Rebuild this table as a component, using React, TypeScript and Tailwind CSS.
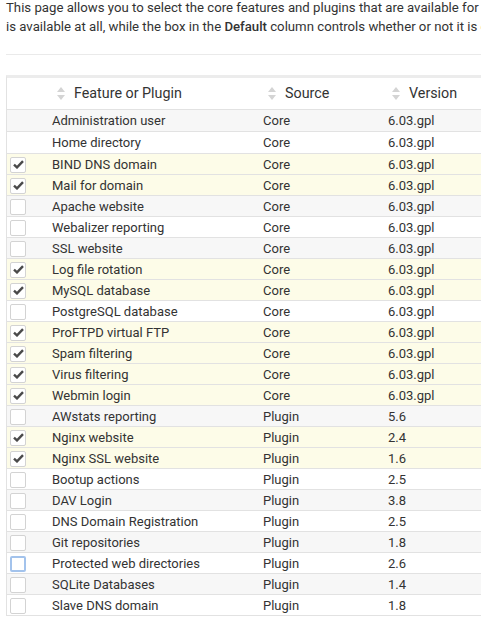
import { useState } from 'react';

type Feature = {
  name: string;
  source: 'Core' | 'Plugin';
  version: string;
  checked?: boolean;
  fixed?: boolean;
};

const features: Feature[] = [
  { name: 'Administration user', source: 'Core', version: '6.03.gpl', fixed: true },
  { name: 'Home directory', source: 'Core', version: '6.03.gpl', fixed: true },
  { name: 'BIND DNS domain', source: 'Core', version: '6.03.gpl', checked: true },
  { name: 'Mail for domain', source: 'Core', version: '6.03.gpl', checked: true },
  { name: 'Apache website', source: 'Core', version: '6.03.gpl' },
  { name: 'Webalizer reporting', source: 'Core', version: '6.03.gpl' },
  { name: 'SSL website', source: 'Core', version: '6.03.gpl' },
  { name: 'Log file rotation', source: 'Core', version: '6.03.gpl', checked: true },
  { name: 'MySQL database', source: 'Core', version: '6.03.gpl', checked: true },
  { name: 'PostgreSQL database', source: 'Core', version: '6.03.gpl' },
  { name: 'ProFTPD virtual FTP', source: 'Core', version: '6.03.gpl', checked: true },
  { name: 'Spam filtering', source: 'Core', version: '6.03.gpl', checked: true },
  { name: 'Virus filtering', source: 'Core', version: '6.03.gpl', checked: true },
  { name: 'Webmin login', source: 'Core', version: '6.03.gpl', checked: true },
  { name: 'AWstats reporting', source: 'Plugin', version: '5.6' },
  { name: 'Nginx website', source: 'Plugin', version: '2.4', checked: true },
  { name: 'Nginx SSL website', source: 'Plugin', version: '1.6', checked: true },
  { name: 'Bootup actions', source: 'Plugin', version: '2.5' },
  { name: 'DAV Login', source: 'Plugin', version: '3.8' },
  { name: 'DNS Domain Registration', source: 'Plugin', version: '2.5' },
  { name: 'Git repositories', source: 'Plugin', version: '1.8' },
  { name: 'Protected web directories', source: 'Plugin', version: '2.6' },
  { name: 'SQLite Databases', source: 'Plugin', version: '1.4' },
  { name: 'Slave DNS domain', source: 'Plugin', version: '1.8' },
];

function SortIcon() {
  return (
    <svg width="8" height="13" viewBox="0 0 8 13" className="shrink-0">
      <path d="M4 0 L8 5 L0 5 Z" fill="#d4d4d4" />
      <path d="M0 8 L8 8 L4 13 Z" fill="#d4d4d4" />
    </svg>
  );
}

function Checkbox({ checked, focused, onToggle }: { checked: boolean; focused?: boolean; onToggle: () => void }) {
  return (
    <button
      type="button"
      onClick={onToggle}
      className={`flex items-center justify-center w-[16px] h-[16px] rounded-[2px] bg-white ${
        focused ? 'border-2 border-[#a3c3ec]' : 'border border-[#d3d3d3]'
      }`}
    >
      {checked && (
        <svg width="11" height="9" viewBox="0 0 11 9" className="-mt-[1px]">
          <path d="M1 4.6 L4 7.4 L10 1.2" fill="none" stroke="#4a4a4a" strokeWidth="2.4" />
        </svg>
      )}
    </button>
  );
}

export default function App() {
  const [rows, setRows] = useState(features);

  const toggle = (i: number) =>
    setRows((prev) => prev.map((r, j) => (j === i ? { ...r, checked: !r.checked } : r)));

  const rowBg = (r: Feature, i: number) => {
    if (r.checked) return 'bg-[#fdfce8]';
    return i % 2 === 0 ? 'bg-[#f7f7f7]' : 'bg-white';
  };

  return (
    <div className="w-[481px] h-[620px] overflow-hidden bg-white text-[#333] font-['Roboto',sans-serif]">
      <div className="w-[700px] pl-[6px]">
        <div className="text-[13.2px] leading-[19px] -mt-[2px] whitespace-nowrap">
          <p>This page allows you to select the core features and plugins that are available for new virtual servers. The checkbox in the Enabled column</p>
          <p>
            is available at all, while the box in the <b className="font-medium">Default</b> column controls whether or not it is enabled by default.
          </p>
        </div>
        <hr className="mt-[18px] border-t border-[#eaeaea]" />

        <div className="mt-[20px] border-t-[3px] border-l border-[#ececec] border-l-[#e2e2e2] w-[640px]">
          <div className="flex h-[32px] items-center border-b border-[#e2e2e2] text-[14.3px]">
            <div className="w-[40px]" />
            <div className="w-[211px] flex items-center gap-[9px] pl-[10px]">
              <SortIcon />
              <span>Feature or Plugin</span>
            </div>
            <div className="w-[125px] flex items-center gap-[9px] pl-[10px]">
              <SortIcon />
              <span>Source</span>
            </div>
            <div className="w-[150px] flex items-center gap-[9px] pl-[9px]">
              <SortIcon />
              <span>Version</span>
            </div>
          </div>

          {rows.map((r, i) => (
            <div
              key={r.name}
              className={`flex items-center border-b border-[#e2e2e2] text-[13px] ${r.fixed ? 'h-[22px]' : 'h-[21px] pt-[2px]'} ${rowBg(r, i)}`}
            >
              <div className="w-[40px] pl-[3px] flex items-center">
                {!r.fixed && (
                  <Checkbox
                    checked={!!r.checked}
                    focused={r.name === 'Protected web directories'}
                    onToggle={() => toggle(i)}
                  />
                )}
              </div>
              <div className="w-[211px] pl-[5px]">{r.name}</div>
              <div className="w-[125px] pl-[5px]">{r.source}</div>
              <div className="w-[150px] pl-[5px]">{r.version}</div>
            </div>
          ))}
        </div>
      </div>
    </div>
  );
}
